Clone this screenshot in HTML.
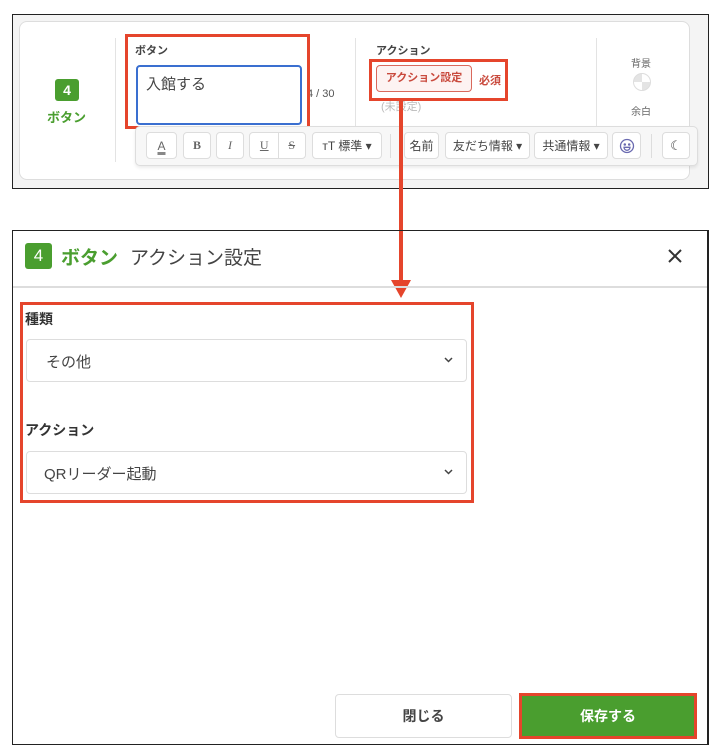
<!DOCTYPE html>
<html><head><meta charset="utf-8"><style>
*{box-sizing:border-box;margin:0;padding:0}
body{width:720px;height:756px;background:#fff;position:relative;font-family:"Liberation Sans","Noto Sans CJK JP",sans-serif;overflow:hidden;color:#333}
.a{position:absolute}
.btn{position:absolute;top:132px;height:27px;border:1px solid #ddd;border-radius:4px;background:#fff;font-size:12px;color:#444;display:flex;align-items:center;justify-content:center}
</style></head><body>
<div class="a" style="left:12px;top:14px;width:697px;height:175px;border:1.5px solid #222;background:#f4f4f4"></div>
<div class="a" style="left:19px;top:21px;width:671px;height:159px;border:1px solid #ddd;border-radius:8px;background:#fff"></div>
<div class="a" style="left:115px;top:38px;width:1px;height:124px;background:#e3e3e3"></div>
<div class="a" style="left:355px;top:38px;width:1px;height:90px;background:#e3e3e3"></div>
<div class="a" style="left:596px;top:38px;width:1px;height:90px;background:#e3e3e3"></div>
<div class="a" style="left:55px;top:79px;width:24px;height:22px;background:#4a9e2f;border-radius:3px;color:#fff;font-weight:bold;font-size:14px;text-align:center;line-height:22px">4</div>
<div class="a" style="left:47px;top:107px;font-size:13px;font-weight:bold;color:#4a9e2f">ボタン</div>
<div class="a" style="left:135px;top:42px;font-size:11px;font-weight:bold;color:#444">ボタン</div>
<div class="a" style="left:136px;top:65px;width:166px;height:60px;border:2px solid #3a6fd0;border-radius:4px;padding:6px 8px;font-size:15px;color:#444">入館する</div>
<div class="a" style="left:307px;top:88px;font-size:11px;color:#555">4 / 30</div>
<div class="a" style="left:125px;top:34px;width:185px;height:95px;border:3px solid #e5452c"></div>
<div class="a" style="left:376px;top:42px;font-size:11px;font-weight:bold;color:#444">アクション</div>
<div class="a" style="left:376px;top:65px;width:96px;height:27px;border:1px solid #d9695c;border-radius:4px;background:#fdf3f2;font-size:11px;font-weight:bold;color:#c94a3d;text-align:center;line-height:25px">アクション設定</div>
<div class="a" style="left:479px;top:72px;font-size:11px;font-weight:bold;color:#c94a3d">必須</div>
<div class="a" style="left:381px;top:98px;font-size:11px;color:#bbb">(未設定)</div>
<div class="a" style="left:369px;top:59px;width:139px;height:42px;border:3px solid #e5452c"></div>
<div class="a" style="left:631px;top:55px;font-size:10px;color:#666">背景</div>
<div class="a" style="left:633px;top:73px;width:18px;height:18px;border-radius:50%;border:1px solid #ddd;background:conic-gradient(#fff 0 25%,#e4e4e4 0 50%,#fff 0 75%,#e4e4e4 0)"></div>
<div class="a" style="left:631px;top:103px;font-size:10px;color:#666">余白</div>
<div class="a" style="left:135px;top:126px;width:563px;height:40px;border:1px solid #ddd;border-radius:5px;background:#f7f7f7;box-shadow:0 2px 3px rgba(0,0,0,.08)"></div>
<div class="btn" style="left:146px;width:31px;text-decoration:underline;text-decoration-thickness:3px;text-decoration-color:#888;color:#666">A</div>
<div class="btn" style="left:183px;width:28px;font-weight:bold;color:#666;font-family:'Liberation Serif',serif">B</div>
<div class="btn" style="left:216px;width:28px;font-style:italic;color:#666;font-family:'Liberation Serif',serif">I</div>
<div class="btn" style="left:249px;width:57px;justify-content:space-around;color:#666;font-family:'Liberation Serif',serif"><u>U</u><s>S</s></div>
<div class="a" style="left:278px;top:133px;width:1px;height:25px;background:#ddd"></div>
<div class="btn" style="left:312px;width:70px">ᴛT 標準 ▾</div>
<div class="a" style="left:390px;top:134px;width:1px;height:24px;background:#ddd"></div>
<div class="btn" style="left:404px;width:35px">名前</div>
<div class="btn" style="left:445px;width:85px">友だち情報 ▾</div>
<div class="btn" style="left:534px;width:74px">共通情報 ▾</div>
<div class="btn" style="left:612px;width:29px"><svg width="16" height="16" viewBox="0 0 16 16" fill="none" stroke="#6a6ab0" stroke-width="1.3"><circle cx="8" cy="8" r="6.5"/><circle cx="5.8" cy="6.5" r=".6" fill="#6a6ab0"/><circle cx="10.2" cy="6.5" r=".6" fill="#6a6ab0"/><path d="M5 9.3h6a3 3 0 0 1-6 0z"/></svg></div>
<div class="a" style="left:651px;top:134px;width:1px;height:24px;background:#ddd"></div>
<div class="btn" style="left:662px;width:28px;font-size:13px">☾</div>
<div class="a" style="left:399px;top:101px;width:4px;height:184px;background:#e5452c"></div>
<div class="a" style="left:391px;top:280px;width:0;height:0;border-left:10px solid transparent;border-right:10px solid transparent;border-top:18px solid #e5452c"></div>
<div class="a" style="left:12px;top:230px;width:697px;height:515px;border:1.5px solid #222;border-right-width:2.5px"></div>
<div class="a" style="left:13px;top:286px;width:694px;height:2px;background:#ddd"></div>
<div class="a" style="left:25px;top:243px;width:27px;height:26px;background:#4a9e2f;border-radius:3px;color:#fff;font-size:17px;text-align:center;line-height:26px">4</div>
<div class="a" style="left:61px;top:243px;font-size:19px;font-weight:bold;color:#4a9e2f">ボタン</div>
<div class="a" style="left:130px;top:243px;font-size:19px;color:#444">アクション設定</div>
<svg class="a" style="left:668px;top:249px" width="14" height="14" viewBox="0 0 14 14" stroke="#333" stroke-width="2"><path d="M1 1L13 13M13 1L1 13"/></svg>
<div class="a" style="left:20px;top:302px;width:454px;height:201px;border:3px solid #e5452c"></div>
<div class="a" style="left:25px;top:309px;font-size:14px;font-weight:bold;color:#333">種類</div>
<div class="a" style="left:26px;top:339px;width:441px;height:43px;border:1px solid #ddd;border-radius:4px;font-size:15px;color:#444;padding:11px 19px">その他</div>
<svg class="a" style="left:444px;top:357px" width="9" height="6" viewBox="0 0 9 6" fill="none" stroke="#444" stroke-width="1.5"><path d="M1 1l3.5 3.5L8 1"/></svg>
<div class="a" style="left:25px;top:420px;font-size:14px;font-weight:bold;color:#333">アクション</div>
<div class="a" style="left:26px;top:451px;width:441px;height:43px;border:1px solid #ddd;border-radius:4px;font-size:15px;color:#444;padding:11px 17px">QRリーダー起動</div>
<svg class="a" style="left:444px;top:469px" width="9" height="6" viewBox="0 0 9 6" fill="none" stroke="#444" stroke-width="1.5"><path d="M1 1l3.5 3.5L8 1"/></svg>
<div class="a" style="left:335px;top:694px;width:177px;height:44px;border:1px solid #ddd;border-radius:4px;font-size:14px;font-weight:bold;color:#444;text-align:center;line-height:42px">閉じる</div>
<div class="a" style="left:519px;top:693px;width:178px;height:46px;border:3px solid #e5452c;background:#4a9e2f;font-size:14px;font-weight:bold;color:#fff;text-align:center;line-height:40px">保存する</div>
</body></html>
